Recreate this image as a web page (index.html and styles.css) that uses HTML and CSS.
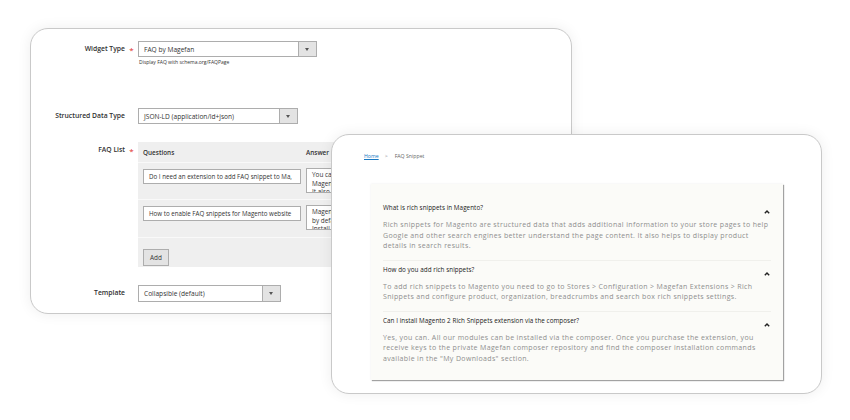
FILE: index.html
```html
<!DOCTYPE html>
<html>
<head><meta charset="utf-8"><title>FAQ snippet</title>
<link rel="stylesheet" href="styles.css">
</head>
<body>
<div class="stage">

 <div class="win back">
  <div class="row r1">
   <label class="lbl">Widget Type</label><span class="req">*</span>
   <div class="field">
    <div class="select w179"><span>FAQ by Magefan</span><i class="arr"></i></div>
    <div class="note">Display FAQ with schema.org/FAQPage</div>
   </div>
  </div>
  <div class="row r2">
   <label class="lbl">Structured Data Type</label><span class="req"></span>
   <div class="field">
    <div class="select w160"><span>JSON-LD (application/ld+json)</span><i class="arr"></i></div>
   </div>
  </div>
  <div class="row r3">
   <label class="lbl">FAQ List</label><span class="req">*</span>
   <div class="field">
    <div class="faq">
     <div class="frow fhead"><span>Questions</span><span>Answer</span></div>
     <div class="frow fitem">
      <div class="inp">Do I need an extension to add FAQ snippet to Ma,</div>
      <div class="area">You can add FAQ snippets with our extension.<br>Magento has no such feature out of the box.<br>It also</div>
     </div>
     <div class="frow fitem">
      <div class="inp">How to enable FAQ snippets for Magento website</div>
      <div class="area">Magento does not support FAQ snippets<br>by default, so you need an extension.<br>Install</div>
     </div>
     <div class="fadd"><button class="btn">Add</button></div>
    </div>
   </div>
  </div>
  <div class="row r4">
   <label class="lbl">Template</label><span class="req"></span>
   <div class="field">
    <div class="select w143"><span>Collapsible (default)</span><i class="arr"></i></div>
   </div>
  </div>
 </div>

 <div class="win front">
  <div class="crumbs"><a href="#">Home</a><span class="sep">&gt;</span><span>FAQ Snippet</span></div>
  <div class="card">
   <div class="item">
    <div class="q"><span>What is rich snippets in Magento?</span><svg class="chev" viewBox="0 0 6 4"><path d="M0.8 3.2L3 1L5.2 3.2"/></svg></div>
    <p class="a">Rich snippets for Magento are structured data that adds additional information to your store pages to help Google and other search engines better understand the page content. It also helps to display product details in search results.</p>
   </div>
   <div class="item">
    <div class="q"><span>How do you add rich snippets?</span><svg class="chev" viewBox="0 0 6 4"><path d="M0.8 3.2L3 1L5.2 3.2"/></svg></div>
    <p class="a">To add rich snippets to Magento you need to go to Stores &gt; Configuration &gt; Magefan Extensions &gt; Rich Snippets and configure product, organization, breadcrumbs and search box rich snippets settings.</p>
   </div>
   <div class="item last">
    <div class="q"><span>Can I install Magento 2 Rich Snippets extension via the composer?</span><svg class="chev" viewBox="0 0 6 4"><path d="M0.8 3.2L3 1L5.2 3.2"/></svg></div>
    <p class="a">Yes, you can. All our modules can be installed via the composer. Once you purchase the extension, you receive keys to the private Magefan composer repository and find the composer installation commands available in the "My Downloads" section.</p>
   </div>
  </div>
 </div>

</div>
</body>
</html>
```
FILE: styles.css
```css
html,body{margin:0;padding:0;background:#fff}
body{font-family:"Open Sans","DejaVu Sans",sans-serif;color:#333}
.stage{position:relative;width:850px;height:420px;overflow:hidden}

/* windows on the canvas */
.win{position:absolute;box-sizing:border-box;background:#fff;border:1px solid #c9c9c9;border-radius:18px;box-shadow:0 0 14px rgba(0,0,0,.07);overflow:hidden}
.back{left:30px;top:28px;width:542px;height:286px;padding-top:12px}
.front{left:331px;top:134px;width:491px;height:260px;padding:17px 0 0 0}

/* admin form */
.row{display:grid;grid-template-columns:94px 13px 1fr;align-items:start}
.r2{margin-top:42px}
.r3{margin-top:18px}
.r4{margin-top:18px}
.lbl{font-size:6.8px;font-weight:600;color:#303030;line-height:16px;text-align:right;white-space:nowrap}
.req{color:#e02b27;font-size:8px;line-height:17px;text-align:center}
.field{min-width:0}
.select{display:flex;align-items:center;box-sizing:border-box;height:16px;border:1px solid #adadad;background:#fff;font-size:6.6px;color:#333}
.select span{flex:1;padding-left:5px;white-space:nowrap;overflow:hidden}
.select .arr{width:17px;height:100%;background:#e3e3e3;border-left:1px solid #adadad;position:relative}
.select .arr:after{content:"";position:absolute;left:6px;top:6px;border-left:2.5px solid transparent;border-right:2.5px solid transparent;border-top:3px solid #555}
.w179{width:179px}
.w160{width:160px}
.w143{width:143px;height:17px}
.note{font-size:5px;color:#333;margin-top:1px;line-height:8px;padding-left:1px}

.faq{background:#efefef;width:420px;height:125px;box-sizing:border-box}
.frow{display:grid;grid-template-columns:158px 1fr;column-gap:5px;padding:0 0 0 5px;border-bottom:1px solid #f9f9f9}
.fhead{height:20px;align-items:center;font-size:6.4px;font-weight:600;color:#333}
.fitem{height:37px;align-items:start;padding-top:5px;box-sizing:border-box}
.fitem + .fitem{height:38px}
.inp{box-sizing:border-box;height:15px;margin-top:1px;border:1px solid #adadad;background:#fff;font-size:6.2px;line-height:13px;padding-left:5px;white-space:nowrap;overflow:hidden;color:#333}
.area{box-sizing:border-box;height:25px;border:1px solid #adadad;background:#fff;font-size:6.4px;line-height:8.5px;padding:2px 0 0 5px;white-space:nowrap;overflow:hidden;color:#333}
.fadd{padding:5px 0 0 5px}
.btn{box-sizing:border-box;height:17px;width:26px;padding:0;border:1px solid #adadad;background:#e3e3e3;font-family:inherit;font-size:6.4px;color:#333}

/* storefront */
.crumbs{padding-left:32px;font-size:5.2px;line-height:8px;color:#666}
.crumbs a{color:#1979c3}
.crumbs .sep{margin:0 7px 0 6px;color:#888}
.card{margin:24px 0 0 39px;width:412px;box-sizing:border-box;background:#fbfbf8;padding:20px 12px 16px 12px;box-shadow:1px 1px 1px rgba(0,0,0,.35),0 0 2px rgba(0,0,0,.08)}
.item{padding-bottom:8px;border-bottom:1px solid #f0f0ec}
.item + .item{padding-top:5px}
.item.last{padding-bottom:0;border-bottom:0}
.q{display:flex;justify-content:space-between;font-size:6.3px;line-height:8px;color:#222;letter-spacing:.05px}
.chev{width:6px;height:4px;margin-top:6px;margin-right:1px;fill:none;stroke:#222;stroke-width:1.4}
.a{margin:6px 0 0 0;font-size:7px;line-height:10.5px;color:#8e8e8e;letter-spacing:.36px}
```
